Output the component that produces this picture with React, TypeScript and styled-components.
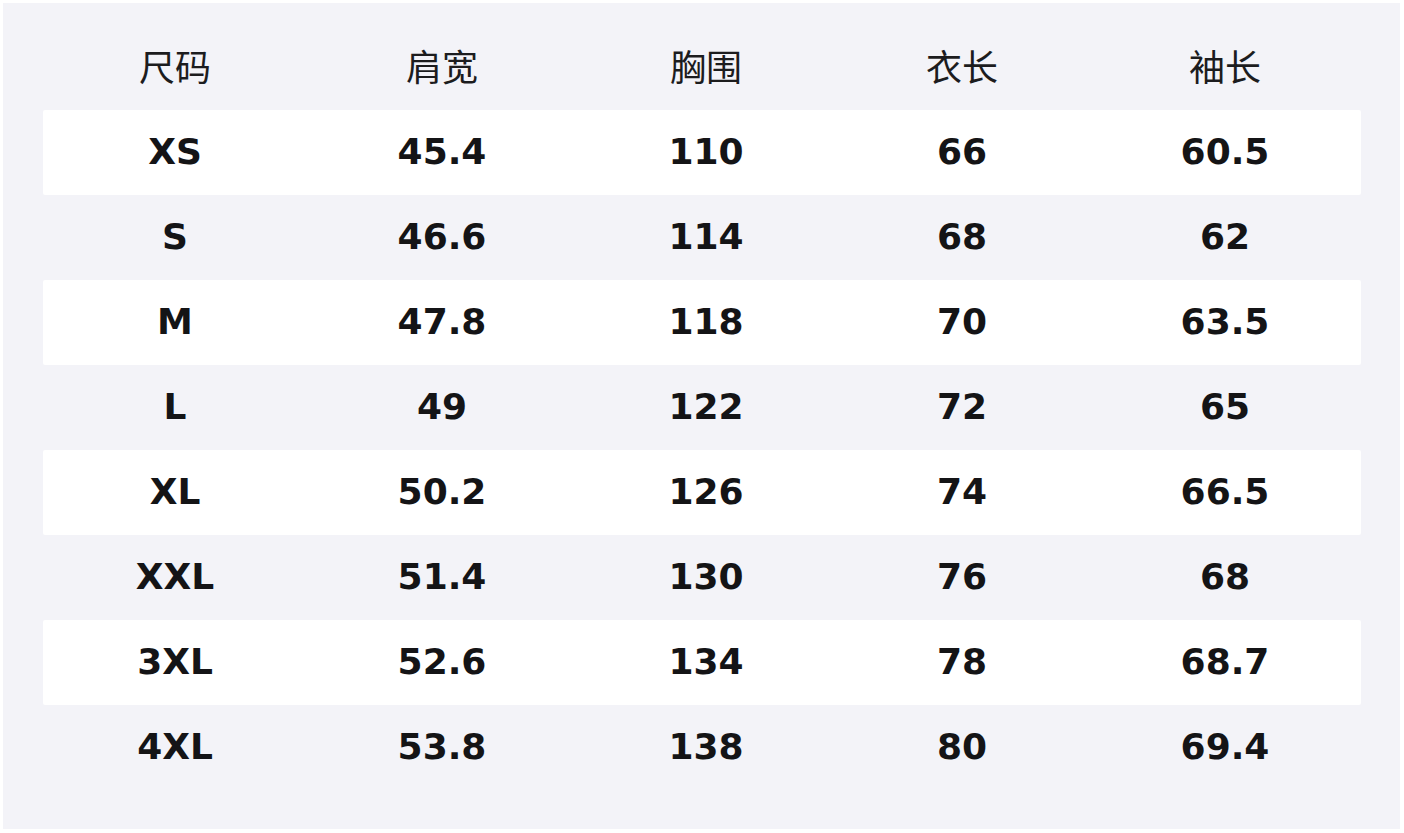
import React from "react";
import styled, { createGlobalStyle } from "styled-components";

const Global = createGlobalStyle`
  html, body { margin: 0; padding: 0; background: #ffffff; }
  body { font-family: "DejaVu Sans", "Noto Sans CJK SC", sans-serif; }
`;

const Page = styled.div`
  padding: 3px;
  width: 1404px;
  height: 833px;
  box-sizing: border-box;
`;

const Panel = styled.div`
  width: 1397px;
  height: 826px;
  box-sizing: border-box;
  background: #f3f3f8;
  padding: 17px 39px 0 40px;
  display: flex;
  flex-direction: column;
`;

const cols = "264px 270px 258px 254px 272px";

const HeaderRow = styled.div`
  display: grid;
  grid-template-columns: ${cols};
  height: 90px;
  align-items: center;
`;

const HeaderCell = styled.div`
  text-align: center;
  font-family: "Noto Sans CJK SC", "DejaVu Sans", sans-serif;
  font-size: 36px;
  font-weight: 400;
  color: #1c1c1e;
  line-height: 1;
`;

const Row = styled.div<{ $striped: boolean }>`
  display: grid;
  grid-template-columns: ${cols};
  height: 85px;
  align-items: center;
  background: ${(p) => (p.$striped ? "#ffffff" : "transparent")};
  border-radius: 2px;
`;

const Cell = styled.div`
  text-align: center;
  font-family: "DejaVu Sans", sans-serif;
  font-size: 36px;
  font-weight: 700;
  color: #141416;
  line-height: 1;
  padding-bottom: 2px;
`;

const headers = ["尺码", "肩宽", "胸围", "衣长", "袖长"];
const rows = [
  ["XS", "45.4", "110", "66", "60.5"],
  ["S", "46.6", "114", "68", "62"],
  ["M", "47.8", "118", "70", "63.5"],
  ["L", "49", "122", "72", "65"],
  ["XL", "50.2", "126", "74", "66.5"],
  ["XXL", "51.4", "130", "76", "68"],
  ["3XL", "52.6", "134", "78", "68.7"],
  ["4XL", "53.8", "138", "80", "69.4"],
];

export default function App() {
  return (
    <Page>
      <Global />
      <Panel>
        <HeaderRow>
          {headers.map((h) => (
            <HeaderCell key={h}>{h}</HeaderCell>
          ))}
        </HeaderRow>
        {rows.map((r, i) => (
          <Row key={r[0]} $striped={i % 2 === 0}>
            {r.map((c, j) => (
              <Cell key={j}>{c}</Cell>
            ))}
          </Row>
        ))}
      </Panel>
    </Page>
  );
}
